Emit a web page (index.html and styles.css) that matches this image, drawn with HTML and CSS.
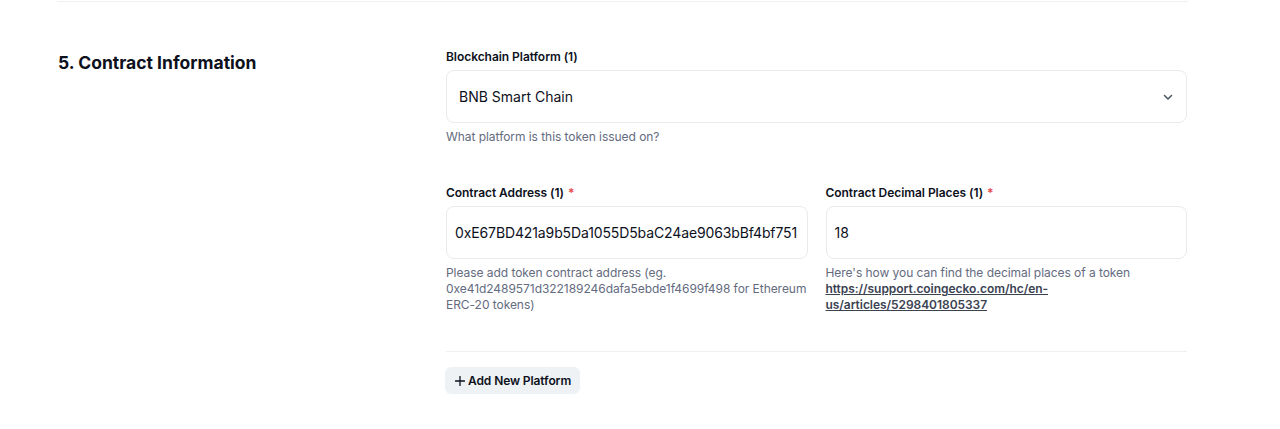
FILE: index.html
```html
<!DOCTYPE html>
<html>
<head>
<meta charset="utf-8">
<link rel="stylesheet" href="styles.css">
</head>
<body>
<div class="page">
  <section class="section">
    <h2 class="section-title">5. Contract Information</h2>
    <div class="section-body">
      <div class="field">
        <div class="label">Blockchain Platform (1)</div>
        <div class="control select">
          <span class="value">BNB Smart Chain</span>
          <svg class="chevron" width="12" height="12" viewBox="0 0 12 12"><path d="M2.5 4.5 L6 8 L9.5 4.5" fill="none" stroke="#4b5263" stroke-width="1.5" stroke-linecap="round" stroke-linejoin="round"/></svg>
        </div>
        <div class="help">What platform is this token issued on?</div>
      </div>
      <div class="row">
        <div class="field">
          <div class="label">Contract Address (1) <span class="req">*</span></div>
          <div class="control input"><span class="value addr">0xE67BD421a9b5Da1055D5baC24ae9063bBf4bf751</span></div>
          <div class="help">Please add token contract address (eg. 0xe41d2489571d322189246dafa5ebde1f4699f498 for Ethereum ERC-20 tokens)</div>
        </div>
        <div class="field">
          <div class="label">Contract Decimal Places (1) <span class="req">*</span></div>
          <div class="control input"><span class="value">18</span></div>
          <div class="help">Here's how you can find the decimal places of a token <a class="link" href="#">https://support.coingecko.com/hc/en-us/articles/5298401805337</a></div>
        </div>
      </div>
      <div class="divider"></div>
      <div class="actions">
        <button class="btn" type="button"><svg class="plus" width="10" height="10" viewBox="0 0 10 10"><path d="M5 0.5 V9.5 M0.5 5 H9.5" stroke="#0d111c" stroke-width="1.3" stroke-linecap="round"/></svg>Add New Platform</button>
      </div>
    </div>
  </section>
</div>
</body>
</html>
```

FILE: styles.css
```css
* { box-sizing: border-box; }
html, body { margin: 0; padding: 0; background: #ffffff; }
body {
  font-family: Inter, "Noto Sans", "Liberation Sans", sans-serif;
  color: #0d111c;
}
.page {
  width: 1131px;
  margin: 1px 0 0 57px;
  border-top: 1px solid #eff1f3;
}
.section {
  display: flex;
  padding-top: 47px;
  padding-bottom: 34px;
}
.section-title {
  width: 389px;
  flex: none;
  margin: 0;
  font-size: 17.5px;
  line-height: 28px;
  font-weight: 700;
  color: #0d111c;
  padding-left: 1px;
}
.section-body {
  flex: 1;
  min-width: 0;
  display: flex;
  flex-direction: column;
  gap: 39px;
  padding-right: 1px;
}
.row {
  display: grid;
  grid-template-columns: minmax(0, 1fr) minmax(0, 1fr);
  gap: 18px;
  margin-top: 1px;
}
.label {
  font-size: 12px;
  line-height: 16px;
  font-weight: 600;
  color: #0d111c;
  margin-bottom: 5px;
  letter-spacing: -0.05px;
}
.req { color: #e5484d; margin-left: 1px; }
.control {
  height: 53px;
  border: 1px solid #e8eaed;
  border-radius: 8px;
  display: flex;
  align-items: center;
  font-size: 14px;
  color: #0d111c;
  overflow: hidden;
  white-space: nowrap;
}
.select { padding: 0 12px 0 12px; justify-content: space-between; }
.input { padding: 0 8px; }
.addr { letter-spacing: -0.12px; }
.chevron { flex: none; }
.help {
  margin-top: 6px;
  font-size: 12px;
  line-height: 16px;
  color: #646b80;
  letter-spacing: -0.05px;
}
.link {
  color: #3b4252;
  font-weight: 600;
  text-decoration: underline;
  word-break: break-word;
}
.divider {
  height: 1px;
  background: #eef0f2;
  margin-top: -1px;
  margin-bottom: -23px;
}
.actions { display: flex; }
.btn {
  font-family: inherit;
  font-size: 12px;
  font-weight: 600;
  color: #0d111c;
  background: #eff2f5;
  border: none;
  border-radius: 6px;
  height: 27px;
  padding: 0 9px 0 10px;
  margin-left: -1px;
  margin-top: -1px;
  display: flex;
  align-items: center;
  cursor: pointer;
  letter-spacing: -0.1px;
}
.plus { flex: none; margin-right: 3px; }
```
